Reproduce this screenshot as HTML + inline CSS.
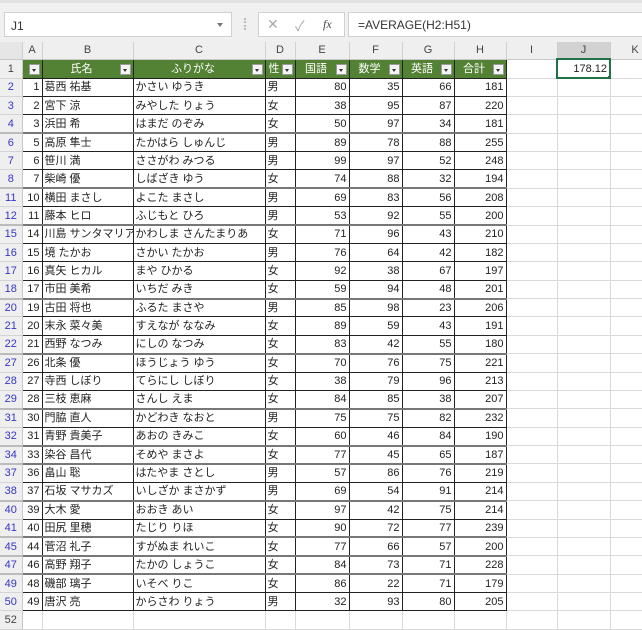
<!DOCTYPE html>
<html><head><meta charset="utf-8"><style>
*{box-sizing:border-box;margin:0;padding:0}
body{width:642px;height:628px;overflow:hidden;background:#fff;font-family:"Liberation Sans","Noto Sans CJK JP",sans-serif;position:relative}
#top{position:absolute;left:0;top:0;width:642px;height:42px;background:#f0f0f0;border-top:3px solid #e2e2e2}
.box{position:absolute;background:#fff;border:1px solid #d0d0d0}
#nb{left:4px;top:9px;width:228px;height:25px;font-size:12px;color:#333;padding:6px 0 0 6px}
#nb:after{content:"";position:absolute;right:8px;top:10px;border:3px solid transparent;border-top:4px solid #777}
#dots{position:absolute;left:244px;top:15px;width:2px;height:12px;border-left:2px dotted #bbb}
#ib{left:258px;top:9px;width:87px;height:25px;color:#aaa;font-size:14px}
#fb{left:348px;top:9px;width:300px;height:25px;font-size:12px;color:#333;padding:5px 0 0 9px}
table{position:absolute;left:0;top:42px;border-collapse:collapse;table-layout:fixed;width:660px}
td{font-size:11px;white-space:nowrap;overflow:hidden;border-right:1px solid #dadada;border-bottom:1px solid #dadada;height:18.38px;padding:0 2px;color:#222;line-height:14px}
tr.ch td{height:17px;background:#efefef;text-align:center;color:#444;font-size:11px;border-right:1px solid #d0d0d0;border-bottom:1px solid #c8c8c8}
td.rh{background:#efefef;text-align:center;color:#3636c8;border-right:1px solid #c8c8c8;border-bottom:1px solid #d4d4d4;font-size:11px;padding:0}
td.t{border:1px solid #222}
td.n{text-align:right}
tr.g td.t{border-top:2px solid #777}
tr.g td.rh{border-top:2px solid #bbb}
tr.h td{height:19px}
tr.h td.t{background:#548235;color:#fff;position:relative;text-align:center;padding-right:14px}
.dd{position:absolute;right:2px;top:4px;width:11px;height:11px;background:#f4f4f4;border:1px solid #999}
.dd:after{content:"";position:absolute;left:2px;top:4px;border:2.5px solid transparent;border-top:3px solid #333}
.sel{position:relative;border:2px solid #217346 !important;text-align:right}
.fh{position:absolute;right:-4px;bottom:-4px;width:6px;height:6px;background:#217346;border:1px solid #fff}
</style></head><body>
<div id="top">
<div class="box" id="nb">J1</div>
<div id="dots"></div>
<div class="box" id="ib"><span style="position:absolute;left:8px;top:3px">✕</span><span style="position:absolute;left:36px;top:3px">✓</span><span style="position:absolute;left:64px;top:4px;font-family:'Liberation Serif',serif;font-style:italic;color:#444;font-size:12px">fx</span></div>
<div class="box" id="fb">=AVERAGE(H2:H51)</div>
</div>
<table>
<colgroup><col style="width:22px"><col style="width:20px"><col style="width:91px"><col style="width:132px"><col style="width:30px"><col style="width:54px"><col style="width:53px"><col style="width:52px"><col style="width:52px"><col style="width:51px"><col style="width:53px"><col style="width:50px"></colgroup>
<tr class="ch"><td style="background:#e6e6e6"></td><td>A</td><td>B</td><td>C</td><td>D</td><td>E</td><td>F</td><td>G</td><td>H</td><td>I</td><td style="background:#d2d2d2;border-bottom:2px solid #217346">J</td><td>K</td></tr>
<tr class="h"><td class="rh" style="color:#444">1</td><td class="t"><span class="dd"></span></td><td class="t">氏名<span class="dd"></span></td><td class="t">ふりがな<span class="dd"></span></td><td class="t">性<span class="dd"></span></td><td class="t">国語<span class="dd"></span></td><td class="t">数学<span class="dd"></span></td><td class="t">英語<span class="dd"></span></td><td class="t">合計<span class="dd"></span></td><td></td><td class="sel">178.12<span class="fh"></span></td><td></td></tr>
<tr><td class="rh">2</td><td class="t n">1</td><td class="t">葛西 祐基</td><td class="t">かさい ゆうき</td><td class="t">男</td><td class="t n">80</td><td class="t n">35</td><td class="t n">66</td><td class="t n">181</td><td></td><td></td><td></td></tr>
<tr><td class="rh">3</td><td class="t n">2</td><td class="t">宮下 涼</td><td class="t">みやした りょう</td><td class="t">女</td><td class="t n">38</td><td class="t n">95</td><td class="t n">87</td><td class="t n">220</td><td></td><td></td><td></td></tr>
<tr><td class="rh">4</td><td class="t n">3</td><td class="t">浜田 希</td><td class="t">はまだ のぞみ</td><td class="t">女</td><td class="t n">50</td><td class="t n">97</td><td class="t n">34</td><td class="t n">181</td><td></td><td></td><td></td></tr>
<tr class="g"><td class="rh">6</td><td class="t n">5</td><td class="t">高原 隼士</td><td class="t">たかはら しゅんじ</td><td class="t">男</td><td class="t n">89</td><td class="t n">78</td><td class="t n">88</td><td class="t n">255</td><td></td><td></td><td></td></tr>
<tr><td class="rh">7</td><td class="t n">6</td><td class="t">笹川 満</td><td class="t">ささがわ みつる</td><td class="t">男</td><td class="t n">99</td><td class="t n">97</td><td class="t n">52</td><td class="t n">248</td><td></td><td></td><td></td></tr>
<tr><td class="rh">8</td><td class="t n">7</td><td class="t">柴崎 優</td><td class="t">しばざき ゆう</td><td class="t">女</td><td class="t n">74</td><td class="t n">88</td><td class="t n">32</td><td class="t n">194</td><td></td><td></td><td></td></tr>
<tr class="g"><td class="rh">11</td><td class="t n">10</td><td class="t">横田 まさし</td><td class="t">よこた まさし</td><td class="t">男</td><td class="t n">69</td><td class="t n">83</td><td class="t n">56</td><td class="t n">208</td><td></td><td></td><td></td></tr>
<tr><td class="rh">12</td><td class="t n">11</td><td class="t">藤本 ヒロ</td><td class="t">ふじもと ひろ</td><td class="t">男</td><td class="t n">53</td><td class="t n">92</td><td class="t n">55</td><td class="t n">200</td><td></td><td></td><td></td></tr>
<tr class="g"><td class="rh">15</td><td class="t n">14</td><td class="t">川島 サンタマリア</td><td class="t">かわしま さんたまりあ</td><td class="t">女</td><td class="t n">71</td><td class="t n">96</td><td class="t n">43</td><td class="t n">210</td><td></td><td></td><td></td></tr>
<tr><td class="rh">16</td><td class="t n">15</td><td class="t">境 たかお</td><td class="t">さかい たかお</td><td class="t">男</td><td class="t n">76</td><td class="t n">64</td><td class="t n">42</td><td class="t n">182</td><td></td><td></td><td></td></tr>
<tr><td class="rh">17</td><td class="t n">16</td><td class="t">真矢 ヒカル</td><td class="t">まや ひかる</td><td class="t">女</td><td class="t n">92</td><td class="t n">38</td><td class="t n">67</td><td class="t n">197</td><td></td><td></td><td></td></tr>
<tr><td class="rh">18</td><td class="t n">17</td><td class="t">市田 美希</td><td class="t">いちだ みき</td><td class="t">女</td><td class="t n">59</td><td class="t n">94</td><td class="t n">48</td><td class="t n">201</td><td></td><td></td><td></td></tr>
<tr class="g"><td class="rh">20</td><td class="t n">19</td><td class="t">古田 将也</td><td class="t">ふるた まさや</td><td class="t">男</td><td class="t n">85</td><td class="t n">98</td><td class="t n">23</td><td class="t n">206</td><td></td><td></td><td></td></tr>
<tr><td class="rh">21</td><td class="t n">20</td><td class="t">末永 菜々美</td><td class="t">すえなが ななみ</td><td class="t">女</td><td class="t n">89</td><td class="t n">59</td><td class="t n">43</td><td class="t n">191</td><td></td><td></td><td></td></tr>
<tr><td class="rh">22</td><td class="t n">21</td><td class="t">西野 なつみ</td><td class="t">にしの なつみ</td><td class="t">女</td><td class="t n">83</td><td class="t n">42</td><td class="t n">55</td><td class="t n">180</td><td></td><td></td><td></td></tr>
<tr class="g"><td class="rh">27</td><td class="t n">26</td><td class="t">北条 優</td><td class="t">ほうじょう ゆう</td><td class="t">女</td><td class="t n">70</td><td class="t n">76</td><td class="t n">75</td><td class="t n">221</td><td></td><td></td><td></td></tr>
<tr><td class="rh">28</td><td class="t n">27</td><td class="t">寺西 しぼり</td><td class="t">てらにし しぼり</td><td class="t">女</td><td class="t n">38</td><td class="t n">79</td><td class="t n">96</td><td class="t n">213</td><td></td><td></td><td></td></tr>
<tr><td class="rh">29</td><td class="t n">28</td><td class="t">三枝 恵麻</td><td class="t">さんし えま</td><td class="t">女</td><td class="t n">84</td><td class="t n">85</td><td class="t n">38</td><td class="t n">207</td><td></td><td></td><td></td></tr>
<tr class="g"><td class="rh">31</td><td class="t n">30</td><td class="t">門脇 直人</td><td class="t">かどわき なおと</td><td class="t">男</td><td class="t n">75</td><td class="t n">75</td><td class="t n">82</td><td class="t n">232</td><td></td><td></td><td></td></tr>
<tr><td class="rh">32</td><td class="t n">31</td><td class="t">青野 貴美子</td><td class="t">あおの きみこ</td><td class="t">女</td><td class="t n">60</td><td class="t n">46</td><td class="t n">84</td><td class="t n">190</td><td></td><td></td><td></td></tr>
<tr class="g"><td class="rh">34</td><td class="t n">33</td><td class="t">染谷 昌代</td><td class="t">そめや まさよ</td><td class="t">女</td><td class="t n">77</td><td class="t n">45</td><td class="t n">65</td><td class="t n">187</td><td></td><td></td><td></td></tr>
<tr class="g"><td class="rh">37</td><td class="t n">36</td><td class="t">畠山 聡</td><td class="t">はたやま さとし</td><td class="t">男</td><td class="t n">57</td><td class="t n">86</td><td class="t n">76</td><td class="t n">219</td><td></td><td></td><td></td></tr>
<tr><td class="rh">38</td><td class="t n">37</td><td class="t">石坂 マサカズ</td><td class="t">いしざか まさかず</td><td class="t">男</td><td class="t n">69</td><td class="t n">54</td><td class="t n">91</td><td class="t n">214</td><td></td><td></td><td></td></tr>
<tr class="g"><td class="rh">40</td><td class="t n">39</td><td class="t">大木 愛</td><td class="t">おおき あい</td><td class="t">女</td><td class="t n">97</td><td class="t n">42</td><td class="t n">75</td><td class="t n">214</td><td></td><td></td><td></td></tr>
<tr><td class="rh">41</td><td class="t n">40</td><td class="t">田尻 里穂</td><td class="t">たじり りほ</td><td class="t">女</td><td class="t n">90</td><td class="t n">72</td><td class="t n">77</td><td class="t n">239</td><td></td><td></td><td></td></tr>
<tr class="g"><td class="rh">45</td><td class="t n">44</td><td class="t">菅沼 礼子</td><td class="t">すがぬま れいこ</td><td class="t">女</td><td class="t n">77</td><td class="t n">66</td><td class="t n">57</td><td class="t n">200</td><td></td><td></td><td></td></tr>
<tr class="g"><td class="rh">47</td><td class="t n">46</td><td class="t">高野 翔子</td><td class="t">たかの しょうこ</td><td class="t">女</td><td class="t n">84</td><td class="t n">73</td><td class="t n">71</td><td class="t n">228</td><td></td><td></td><td></td></tr>
<tr class="g"><td class="rh">49</td><td class="t n">48</td><td class="t">磯部 璃子</td><td class="t">いそべ りこ</td><td class="t">女</td><td class="t n">86</td><td class="t n">22</td><td class="t n">71</td><td class="t n">179</td><td></td><td></td><td></td></tr>
<tr><td class="rh">50</td><td class="t n">49</td><td class="t">唐沢 亮</td><td class="t">からさわ りょう</td><td class="t">男</td><td class="t n">32</td><td class="t n">93</td><td class="t n">80</td><td class="t n">205</td><td></td><td></td><td></td></tr>
<tr><td class="rh" style="color:#444">52</td><td></td><td></td><td></td><td></td><td></td><td></td><td></td><td></td><td></td><td></td><td></td></tr>
</table>
</body></html>
